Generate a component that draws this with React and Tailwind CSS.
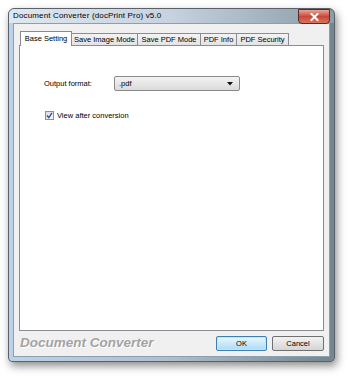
import React from "react";

const ui = { fontFamily: '"Liberation Sans", Arial, sans-serif' };

function Tab({ label, active, w }) {
  if (active) {
    return (
      <div
        className="relative z-10 h-[15px] -mb-px flex items-center justify-center border border-b-0 border-[#898c95] bg-white text-[7.5px] text-black"
        style={{ width: w }}
      >
        {label}
      </div>
    );
  }
  return (
    <div
      className="h-[12px] -ml-px flex items-center justify-center border border-b-0 border-[#898c95] bg-gradient-to-b from-[#f3f3f3] to-[#e3e3e3] text-[7.5px] text-black"
      style={{ width: w }}
    >
      {label}
    </div>
  );
}

export default function App() {
  return (
    <div className="w-[350px] h-[379px] bg-white pl-[8px] pt-[8px] overflow-hidden" style={ui}>
      <div className="relative w-[327px] h-[354px] rounded-t-[6px] rounded-b-[4px] border border-[#5a6168] bg-gradient-to-r from-[#bcd2ea] via-[#aebfd0] to-[#71868e] shadow-[2px_4px_8px_rgba(0,0,0,0.45)] flex flex-col">
        {/* title bar */}
        <div className="relative h-[17px] flex items-center pl-[4px] rounded-t-[6px] bg-gradient-to-r from-[#dfe7f0] via-[#c6d2de] to-[#8b9ea8]">
          <span className="text-[8px] tracking-[0.15px] text-black">Document Converter (docPrint Pro) v5.0</span>
          <div className="absolute right-[4px] top-[0px] w-[32px] h-[15px] rounded-b-[4px] border border-[#5b2a26] bg-gradient-to-b from-[#e8a497] via-[#c9473a] to-[#d8735f] flex items-center justify-center">
            <svg width="9" height="8" viewBox="0 0 9 8">
              <path d="M1.5 1 L7.5 7 M7.5 1 L1.5 7" stroke="#fff" strokeWidth="2" strokeLinecap="square" />
            </svg>
          </div>
        </div>
        {/* client */}
        <div className="mx-[4px] mb-[4px] flex-1 bg-[#f0f0f0] flex flex-col px-[5px] pt-[7px] border border-[#8f9ea8]">
          <div className="flex items-end h-[14px] pl-[1px]">
            <Tab label="Base Setting" active w={52} />
            <Tab label="Save Image Mode" w={67} />
            <Tab label="Save PDF Mode" w={64} />
            <Tab label="PDF Info" w={37} />
            <Tab label="PDF Security" w={53} />
          </div>
          <div className="h-[286px] border border-[#898c95] bg-white">
            <div className="flex items-center pl-[24px] pt-[30px]">
              <span className="w-[70px] text-[7.5px] text-black">Output format:</span>
              <div className="w-[126px] h-[15px] rounded-[2px] border border-[#8a8a8a] bg-gradient-to-b from-[#f4f4f4] to-[#dadada] flex items-center justify-between pl-[4px] pr-[6px]">
                <span className="text-[7.5px] text-black">.pdf</span>
                <svg width="6" height="4" viewBox="0 0 6 4"><path d="M0 0 H6 L3 3.5 Z" fill="#111" /></svg>
              </div>
            </div>
            <div className="flex items-center gap-[3px] pl-[25px] pt-[19px]">
              <div className="w-[9px] h-[9px] border border-[#8e8f8f] bg-gradient-to-br from-[#dcdcdc] to-[#fbfbfb] flex items-center justify-center">
                <svg width="7" height="7" viewBox="0 0 7 7"><path d="M1 3.5 L2.8 5.6 L6 0.8" stroke="#2a4a9e" strokeWidth="1.3" fill="none" /></svg>
              </div>
              <span className="text-[7.5px] text-black">View after conversion</span>
            </div>
          </div>
          <div className="flex items-center h-[25px]">
            <span className="pl-[1px] text-[13.5px] font-bold italic text-[#a3a3a3] [text-shadow:1px_1px_0_#ffffff]">Document Converter</span>
            <div className="ml-auto flex gap-[5px]">
              <button className="w-[51px] h-[15px] rounded-[2px] border border-[#3c7fb1] bg-gradient-to-b from-[#eaf6fd] to-[#a9dbf6] text-[7.5px] text-black shadow-[inset_0_0_0_1px_#c4e5f6]">OK</button>
              <button className="w-[52px] h-[15px] rounded-[2px] border border-[#707070] bg-gradient-to-b from-[#f2f2f2] to-[#d5d5d5] text-[7.5px] text-black">Cancel</button>
            </div>
          </div>
        </div>
      </div>
    </div>
  );
}
